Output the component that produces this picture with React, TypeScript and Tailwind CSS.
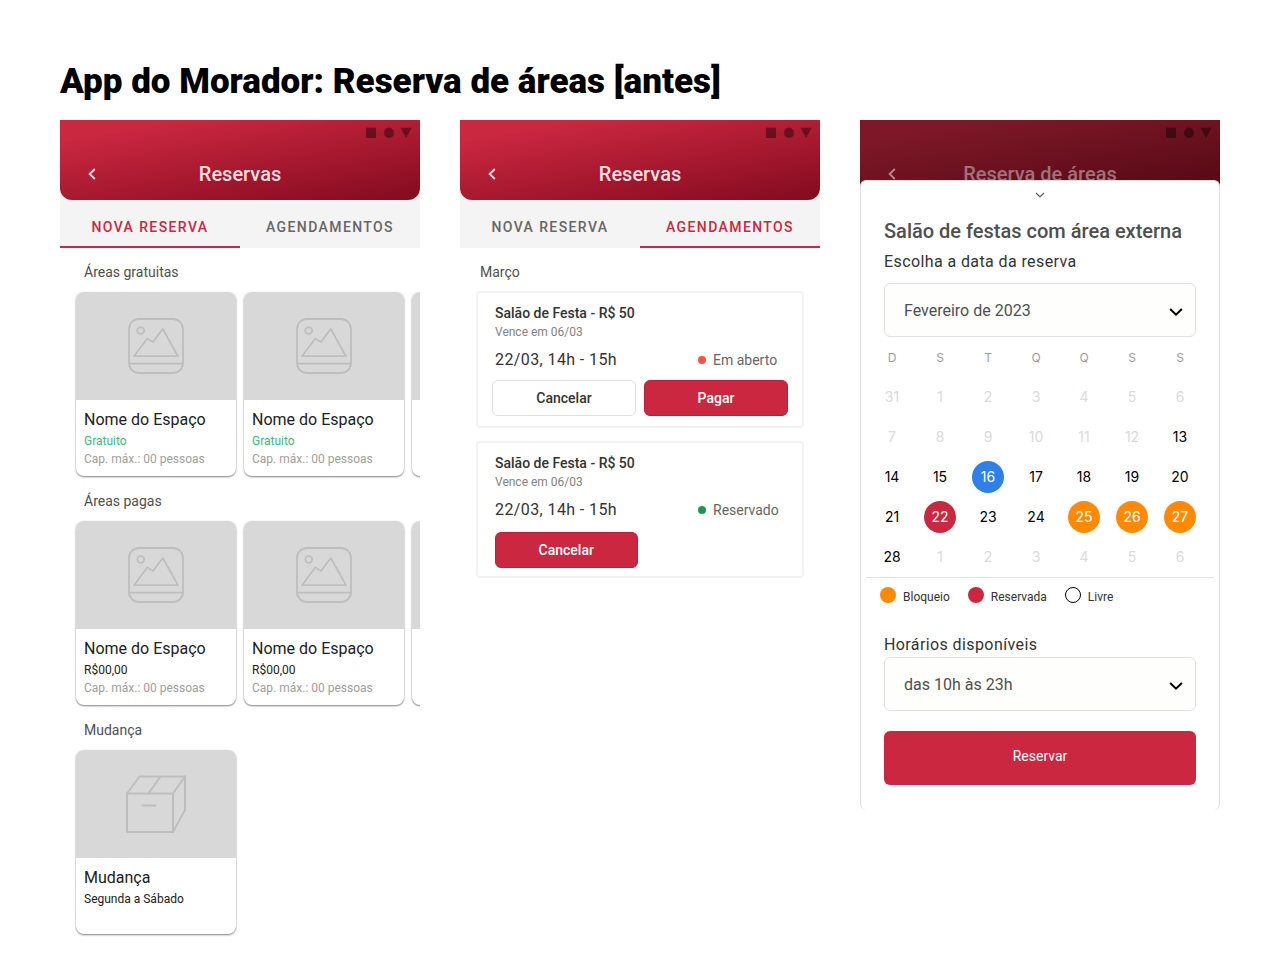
import { useState } from "react";
import type { ReactNode } from "react";
import clsx from "clsx";

function StatusIcons() {
  return (
    <svg width="46" height="12" viewBox="0 0 46 12" className="fill-black/40" aria-hidden="true">
      <rect x="0" y="0.7" width="10" height="10.3" />
      <ellipse cx="23" cy="5.8" rx="5" ry="5.3" />
      <path d="M34.4 0.8H45.8L40.1 10.8Z" />
    </svg>
  );
}

function Header({ title, dimmed = false }: { title: string; dimmed?: boolean }) {
  return (
    <header
      className={clsx(
        "flex h-20 flex-col rounded-b-xl",
        dimmed
          ? "bg-[linear-gradient(170deg,#7e1828_15%,#530813_95%)]"
          : "bg-[linear-gradient(170deg,#ca2740_15%,#870c20_95%)]",
      )}
    >
      <div className="flex justify-end pt-[7px] pr-2">
        <StatusIcons />
      </div>
      <div className="grid flex-1 grid-cols-[64px_1fr_64px] items-center pt-3 pb-1">
        <button type="button" aria-label="Voltar" className="flex h-8 items-center pl-7">
          <svg
            width="8"
            height="12"
            viewBox="0 0 8 12"
            fill="none"
            strokeWidth="1.8"
            className={dimmed ? "stroke-[#b9898f]" : "stroke-[#f8e6e8]"}
          >
            <path d="M6.8 1L1.6 6L6.8 11" />
          </svg>
        </button>
        <h2
          className={clsx(
            "text-center text-xl leading-6 font-medium",
            dimmed ? "text-[#a0727a]" : "text-[#f5dfe2]",
          )}
        >
          {title}
        </h2>
      </div>
    </header>
  );
}

function Tabs({ active }: { active: "nova" | "agendamentos" }) {
  const base = "h-12 flex-1 border-b-2 pt-2 text-sm font-medium tracking-widest uppercase";
  const on = "border-[#cb2740] text-[#cb2740]";
  const off = "border-transparent text-[#666666]";
  return (
    <div role="tablist" className="flex">
      <button type="button" role="tab" aria-selected={active === "nova"} className={clsx(base, active === "nova" ? on : off)}>
        Nova reserva
      </button>
      <button
        type="button"
        role="tab"
        aria-selected={active === "agendamentos"}
        className={clsx(base, active === "agendamentos" ? on : off)}
      >
        Agendamentos
      </button>
    </div>
  );
}

function PictureIcon() {
  return (
    <svg width="56" height="56" viewBox="0 0 56 56" fill="none" stroke="#bebebe" strokeWidth="1.8" strokeLinejoin="round" aria-hidden="true">
      <rect x="1" y="1" width="54" height="54" rx="10" />
      <circle cx="12.7" cy="12.5" r="3.4" />
      <path d="M6 38.2L19.2 20.5L25 24L34.8 11L50 38.2Z" />
      <path d="M1 45.6H55" />
    </svg>
  );
}

function BoxIcon() {
  return (
    <svg width="60" height="58" viewBox="0 0 60 58" fill="none" stroke="#bebebe" strokeWidth="2" strokeLinejoin="round" strokeLinecap="round" aria-hidden="true">
      <path d="M1 18.5H47V57H1Z" />
      <path d="M1 18.5L13.5 1.5H59L47 18.5" />
      <path d="M59 1.5V35L47 57" />
      <path d="M34.5 1.5L22.5 18.5" />
      <path d="M16.5 30.5H29.5" />
    </svg>
  );
}

type Space = { name: string; note: string; free?: boolean; capacity?: string; box?: boolean };

const cardFrame = "h-[184px] w-40 shrink-0 overflow-hidden rounded-lg bg-white shadow-[0_1px_2px_rgba(0,0,0,0.5)]";

function SpaceCard({ space }: { space: Space }) {
  return (
    <article className={cardFrame}>
      <div className="flex h-27 items-center justify-center bg-[#d8d8d8]">
        {space.box ? <BoxIcon /> : <PictureIcon />}
      </div>
      <div className="px-2 pt-2">
        <h4 className="text-base leading-6 whitespace-nowrap text-[#212121]">{space.name}</h4>
        <p className={clsx("text-xs leading-[18px]", space.free ? "text-[#41b883]" : "text-[#212121]")}>{space.note}</p>
        {space.capacity && <p className="text-xs leading-[18px] text-[#9e9e9e]">{space.capacity}</p>}
      </div>
    </article>
  );
}

function SpaceSection({ title, spaces, more = false }: { title: string; spaces: Space[]; more?: boolean }) {
  return (
    <section>
      <h3 className="pl-6 text-sm leading-5 text-[#4f4f4f]">{title}</h3>
      <div className="flex gap-2 overflow-hidden pt-[10px] pb-[15px] pl-4">
        {spaces.map((space, i) => (
          <SpaceCard key={i} space={space} />
        ))}
        {more && (
          <div className={cardFrame} aria-hidden="true">
            <div className="h-27 bg-[#d8d8d8]" />
          </div>
        )}
      </div>
    </section>
  );
}

const freeSpace: Space = { name: "Nome do Espaço", note: "Gratuito", free: true, capacity: "Cap. máx.: 00 pessoas" };
const paidSpace: Space = { name: "Nome do Espaço", note: "R$00,00", capacity: "Cap. máx.: 00 pessoas" };
const moving: Space = { name: "Mudança", note: "Segunda a Sábado", box: true };

function NewBookingScreen() {
  return (
    <section className="min-w-0">
      <div className="bg-[#f4f4f4]">
        <Header title="Reservas" />
        <Tabs active="nova" />
      </div>
      <div className="pt-[14px]">
        <SpaceSection title="Áreas gratuitas" spaces={[freeSpace, freeSpace]} more />
        <SpaceSection title="Áreas pagas" spaces={[paidSpace, paidSpace]} more />
        <SpaceSection title="Mudança" spaces={[moving]} />
      </div>
    </section>
  );
}

function ActionButton({ primary = false, children }: { primary?: boolean; children: ReactNode }) {
  return (
    <button
      type="button"
      className={clsx(
        "h-9 rounded-md border text-sm font-medium",
        primary ? "border-[#b9203a] bg-[#cb2740] text-white" : "border-[#e0e0e0] bg-white text-[#333333]",
      )}
    >
      {children}
    </button>
  );
}

function BookingCard({ status, paid = false }: { status: string; paid?: boolean }) {
  return (
    <article className="h-[137px] rounded border-2 border-[#f3f3f3]">
      <div className="pt-[10px] pr-[14px] pl-[17px]">
        <h4 className="text-sm leading-5 font-medium text-[#333333]">{"Salão de Festa - R$ 50"}</h4>
        <p className="text-xs leading-[18px] text-[#828282]">Vence em 06/03</p>
        <div className="flex items-center justify-between pt-[7px]">
          <p className="text-base leading-6 tracking-wide text-[#333333]">22/03, 14h - 15h</p>
          <p className="flex w-[90px] items-center gap-[7px] text-sm leading-6 text-[#666666]">
            <span className={clsx("size-2 rounded-full", paid ? "bg-[#219653]" : "bg-[#ff5240]")} />
            {status}
          </p>
        </div>
      </div>
      <div className={clsx("grid grid-cols-2 gap-2 pr-[14px]", paid ? "pt-[10px] pl-[17px]" : "pt-2 pl-[14px]")}>
        {paid ? (
          <ActionButton primary>Cancelar</ActionButton>
        ) : (
          <>
            <ActionButton>Cancelar</ActionButton>
            <ActionButton primary>Pagar</ActionButton>
          </>
        )}
      </div>
    </article>
  );
}

function BookingsScreen() {
  return (
    <section className="min-w-0">
      <div className="bg-[#f4f4f4]">
        <Header title="Reservas" />
        <Tabs active="agendamentos" />
      </div>
      <div className="px-4 pt-[14px]">
        <h3 className="pl-1 text-sm leading-5 text-[#4f4f4f]">Março</h3>
        <div className="flex flex-col gap-[13px] pt-[9px]">
          <BookingCard status="Em aberto" />
          <BookingCard status="Reservado" paid />
        </div>
      </div>
    </section>
  );
}

function SelectField({ id, options }: { id: string; options: string[] }) {
  return (
    <div className="relative">
      <select
        id={id}
        className="h-[54px] w-full appearance-none rounded-md border border-[#e0e0e0] bg-[#fefefd] px-[19px] pt-[2px] text-base text-[#4f4f4f]"
      >
        {options.map((o) => (
          <option key={o}>{o}</option>
        ))}
      </select>
      <div className="pointer-events-none absolute inset-y-0 right-[13px] flex items-center pt-1">
        <svg width="14" height="10" viewBox="0 0 14 10" fill="none" stroke="#000" strokeWidth="2" aria-hidden="true">
          <path d="M1.2 2L7 7.6L12.8 2" />
        </svg>
      </div>
    </div>
  );
}

type Kind = "out" | "free" | "today" | "booked" | "blocked";

const weeks: { first: number; kinds: Kind[]; days: number[] }[] = [
  { first: 0, days: [31, 1, 2, 3, 4, 5, 6], kinds: ["out", "out", "out", "out", "out", "out", "out"] },
  { first: 1, days: [7, 8, 9, 10, 11, 12, 13], kinds: ["out", "out", "out", "out", "out", "out", "free"] },
  { first: 2, days: [14, 15, 16, 17, 18, 19, 20], kinds: ["free", "free", "today", "free", "free", "free", "free"] },
  { first: 3, days: [21, 22, 23, 24, 25, 26, 27], kinds: ["free", "booked", "free", "free", "blocked", "blocked", "blocked"] },
  { first: 4, days: [28, 1, 2, 3, 4, 5, 6], kinds: ["free", "out", "out", "out", "out", "out", "out"] },
];

const dayStyle: Record<Kind, string> = {
  out: "text-[#d9dadc]",
  free: "text-black",
  today: "bg-[#2f80ed] text-white",
  booked: "bg-[#cb2740] text-white",
  blocked: "bg-[#ff8a00] text-white",
};

function Calendar() {
  return (
    <table className="w-full table-fixed font-[Inter,sans-serif]">
      <thead>
        <tr className="h-10">
          {["D", "S", "T", "Q", "Q", "S", "S"].map((d, i) => (
            <th key={i} scope="col" className="p-0 pt-[2px] text-center text-xs font-normal text-[#9b9da1]">
              {d}
            </th>
          ))}
        </tr>
      </thead>
      <tbody>
        {weeks.map((week) => (
          <tr key={week.first} className="h-10">
            {week.days.map((day, i) => (
              <td key={i} className="p-0">
                <button
                  type="button"
                  disabled={week.kinds[i] === "out"}
                  className={clsx("mx-auto flex size-8 items-center justify-center rounded-full text-sm", dayStyle[week.kinds[i]])}
                >
                  {day}
                </button>
              </td>
            ))}
          </tr>
        ))}
      </tbody>
    </table>
  );
}

function LegendItem({ dot, children }: { dot: string; children: ReactNode }) {
  return (
    <li className="flex items-center gap-[7px]">
      <span className={clsx("size-4 rounded-full", dot)} />
      <span className="pt-1 text-xs leading-4">{children}</span>
    </li>
  );
}

function AreaScreen() {
  const [open, setOpen] = useState(true);
  return (
    <section className="min-w-0">
      <Header title="Reserva de áreas" dimmed />
      <div className="relative -mt-5 rounded-md border-x border-t border-[#dedede] bg-white pb-[25px]">
        <button
          type="button"
          aria-label="Recolher"
          aria-expanded={open}
          onClick={() => setOpen(!open)}
          className="flex h-7 w-full items-center justify-center"
        >
          <svg width="10" height="6" viewBox="0 0 10 6" fill="none" stroke="#666" strokeWidth="1.2" aria-hidden="true">
            <path d="M1 1L5 4.8L9 1" />
          </svg>
        </button>
        <div className="px-[23px] pt-[8px]">
          <h2 className="text-xl leading-7 font-medium text-[#4f4f4f]">Salão de festas com área externa</h2>
          <label htmlFor="month" className="block pt-[5px] pb-[9px] text-base leading-6 tracking-wide text-[#333333]">
            Escolha a data da reserva
          </label>
          <SelectField id="month" options={["Fevereiro de 2023", "Março de 2023"]} />
        </div>
        <div className="pr-[15px] pl-[7px]">
          <Calendar />
        </div>
        <hr className="mx-[5px] border-[#e0e0e0]" />
        <ul className="flex gap-[18px] px-[19px] pt-[7px] text-[#333333]">
          <LegendItem dot="bg-[#ff8a00]">Bloqueio</LegendItem>
          <LegendItem dot="bg-[#cb2740]">Reservada</LegendItem>
          <LegendItem dot="border border-black bg-white">Livre</LegendItem>
        </ul>
        <div className="px-[23px] pt-7">
          <label htmlFor="hours" className="block text-base leading-6 tracking-wide text-[#333333]">
            Horários disponíveis
          </label>
          <SelectField id="hours" options={["das 10h às 23h"]} />
          <button type="button" className="mt-5 h-[54px] w-full rounded-md bg-[#cb2740] pb-1 text-sm text-white">
            Reservar
          </button>
        </div>
      </div>
    </section>
  );
}

export default function App() {
  return (
    <main className="min-h-screen bg-white px-[60px] pt-[60px] pb-2 font-[Roboto,sans-serif]">
      <h1 className="pb-4 text-[35px] leading-[44px] font-black text-black">
        App do Morador: Reserva de áreas [antes]
      </h1>
      <div className="grid grid-cols-3 gap-10">
        <NewBookingScreen />
        <BookingsScreen />
        <AreaScreen />
      </div>
    </main>
  );
}
